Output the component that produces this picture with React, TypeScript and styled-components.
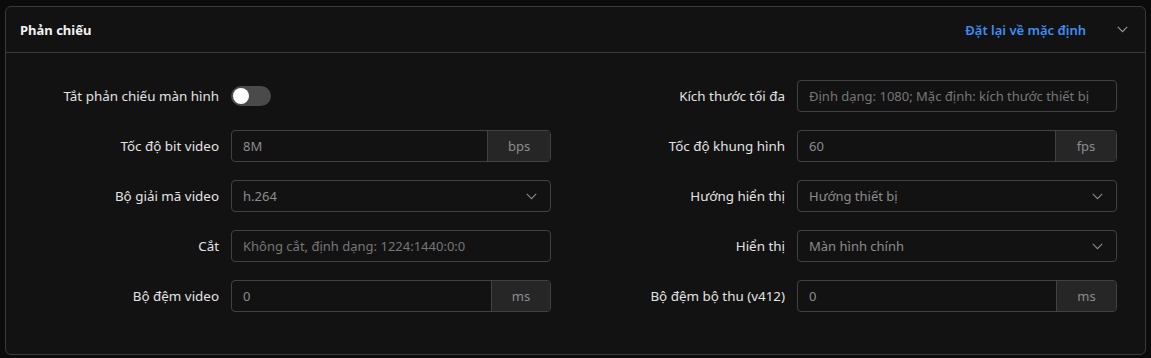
import React, { useState } from "react";
import styled, { createGlobalStyle } from "styled-components";

const GlobalStyle = createGlobalStyle`
  html, body {
    margin: 0;
    background: #0b0b0b;
    font-family: "Noto Sans", "Open Sans", "Liberation Sans", sans-serif;
  }
`;

const Page = styled.div`
  padding: 6px 5px 3px 5px;
`;

const Card = styled.section`
  background: #121212;
  border: 1px solid #3a3a3a;
  border-radius: 6px;
  overflow: hidden;
`;

const Header = styled.header`
  height: 45px;
  display: flex;
  align-items: center;
  padding: 0 17px 0 14px;
  border-bottom: 1px solid #3a3a3a;
`;

const Title = styled.h2`
  flex: 1;
  margin: 0;
  font-size: 13px;
  font-weight: 700;
  color: #f2f2f2;
`;

const ResetLink = styled.button`
  background: none;
  border: none;
  padding: 0;
  margin-right: 31px;
  font-family: inherit;
  font-size: 13px;
  font-weight: 600;
  color: #3c8ef3;
  cursor: pointer;
`;

const Body = styled.div`
  display: grid;
  grid-template-columns: 532px 532px;
  column-gap: 34px;
  padding: 27px 13px 42px;
`;

const Column = styled.div`
  display: flex;
  flex-direction: column;
  gap: 18px;
`;

const Row = styled.div`
  display: grid;
  grid-template-columns: 200px 320px;
  column-gap: 12px;
  align-items: center;
  height: 32px;
`;

const Label = styled.label`
  text-align: right;
  font-size: 13.4px;
  color: #e3e3e3;
  white-space: nowrap;
`;

const Field = styled.div`
  display: flex;
  height: 32px;
  box-sizing: border-box;
  border: 1px solid #424242;
  border-radius: 4px;
  overflow: hidden;
  background: #121212;
`;

const Input = styled.input`
  flex: 1;
  min-width: 0;
  background: transparent;
  border: none;
  outline: none;
  padding: 0 11px;
  font-family: inherit;
  font-size: 13px;
  color: #8c8c8c;
  &::placeholder {
    color: #767676;
  }
`;

const Addon = styled.span<{ $w: number }>`
  width: ${(p) => p.$w}px;
  display: flex;
  align-items: center;
  justify-content: center;
  background: #262626;
  border-left: 1px solid #424242;
  font-size: 13px;
  color: #8c8c8c;
`;

const SelectBox = styled(Field)`
  align-items: center;
  justify-content: space-between;
  padding: 0 13px 0 11px;
  font-size: 13px;
  color: #8c8c8c;
`;

const Switch = styled.button<{ $on: boolean }>`
  width: 40px;
  height: 20px;
  padding: 0;
  border: none;
  border-radius: 10px;
  background: ${(p) => (p.$on ? "#3c8ef3" : "#4a4a4a")};
  display: flex;
  align-items: center;
  justify-content: ${(p) => (p.$on ? "flex-end" : "flex-start")};
  cursor: pointer;
`;

const Knob = styled.span`
  width: 16px;
  height: 16px;
  margin: 0 2px;
  border-radius: 50%;
  background: #ffffff;
`;

const Chevron = ({ color = "#8c8c8c" }: { color?: string }) => (
  <svg width="11" height="7" viewBox="0 0 11 7" fill="none">
    <path d="M0.8 0.8 L5.5 5.6 L10.2 0.8" stroke={color} strokeWidth="1.1" />
  </svg>
);

const InputRow = ({ label, value, placeholder, unit, unitWidth }: {
  label: string;
  value?: string;
  placeholder?: string;
  unit?: string;
  unitWidth?: number;
}) => (
  <Row>
    <Label>{label}</Label>
    <Field>
      <Input defaultValue={value} placeholder={placeholder} />
      {unit && <Addon $w={unitWidth || 60}>{unit}</Addon>}
    </Field>
  </Row>
);

const SelectRow = ({ label, value }: { label: string; value: string }) => (
  <Row>
    <Label>{label}</Label>
    <SelectBox>
      <span>{value}</span>
      <Chevron />
    </SelectBox>
  </Row>
);

export default function App() {
  const [mirrorOff, setMirrorOff] = useState(false);

  return (
    <Page>
      <GlobalStyle />
      <Card>
        <Header>
          <Title>Phản chiếu</Title>
          <ResetLink>Đặt lại về mặc định</ResetLink>
          <Chevron color="#9a9a9a" />
        </Header>
        <Body>
          <Column>
            <Row>
              <Label>Tắt phản chiếu màn hình</Label>
              <Switch $on={mirrorOff} onClick={() => setMirrorOff(!mirrorOff)}>
                <Knob />
              </Switch>
            </Row>
            <InputRow label="Tốc độ bit video" value="8M" unit="bps" unitWidth={62} />
            <SelectRow label="Bộ giải mã video" value="h.264" />
            <InputRow label="Cắt" placeholder="Không cắt, định dạng: 1224:1440:0:0" />
            <InputRow label="Bộ đệm video" value="0" unit="ms" unitWidth={58} />
          </Column>
          <Column>
            <InputRow label="Kích thước tối đa" placeholder="Định dạng: 1080; Mặc định: kích thước thiết bị" />
            <InputRow label="Tốc độ khung hình" value="60" unit="fps" unitWidth={60} />
            <SelectRow label="Hướng hiển thị" value="Hướng thiết bị" />
            <SelectRow label="Hiển thị" value="Màn hình chính" />
            <InputRow label="Bộ đệm bộ thu (v412)" value="0" unit="ms" unitWidth={59} />
          </Column>
        </Body>
      </Card>
    </Page>
  );
}
